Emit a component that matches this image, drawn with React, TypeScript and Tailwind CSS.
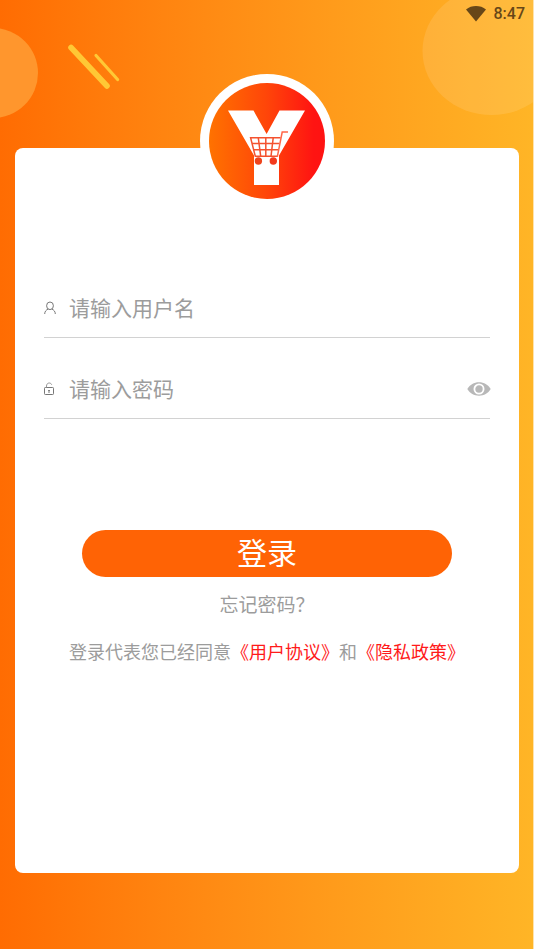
import { useState } from 'react';

function WifiIcon() {
  return (
    <svg width="20" height="16" viewBox="0 0 20 16" fill="#674718" aria-hidden="true">
      <path d="M0 3.4C2.9 1.2 6.3 0 10 0s7.1 1.2 10 3.4L10 15.6z" />
    </svg>
  );
}

function Decoration() {
  return (
    <>
      <svg
        className="absolute left-0 top-0 pointer-events-none"
        width="140"
        height="130"
        viewBox="0 0 140 130"
        aria-hidden="true"
      >
        <circle cx="-7" cy="73" r="45" fill="#ff962d" />
        <g stroke="#ffc835" strokeLinecap="round">
          <path d="M71 47.5L107 86" strokeWidth="5.6" />
          <path d="M96 55.5L117.6 79.5" strokeWidth="3.2" />
        </g>
      </svg>
      <svg
        className="absolute right-0 top-0 pointer-events-none"
        width="112"
        height="120"
        viewBox="0 0 112 120"
        aria-hidden="true"
      >
        <ellipse cx="70.5" cy="51" rx="69" ry="64" fill="#fff" fillOpacity="0.11" />
      </svg>
    </>
  );
}

function Logo() {
  return (
    <svg width="116" height="116" viewBox="0 0 116 116" role="img" aria-label="Logo">
      <defs>
        <linearGradient id="logo-fill" x1="0" y1="0" x2="1" y2="0">
          <stop offset="0" stopColor="#ff7200" />
          <stop offset="0.5" stopColor="#ff4509" />
          <stop offset="0.9" stopColor="#ff1412" />
          <stop offset="1" stopColor="#ff1212" />
        </linearGradient>
      </defs>
      <circle cx="58" cy="58" r="58" fill="url(#logo-fill)" />
      <path d="M19 27.5h25.5L57.6 51 70.5 27.5H96L70 72.5V102H45V72.5z" fill="#fff" />
      <g fill="none" stroke="#f4522f" strokeWidth="1.5">
        <path d="M68.3 73.3H46.3L41.6 54.8H71.6" />
        <path d="M43 60.6h27.5M44.6 66.8h25M49.3 54.8l2.4 18.5M56.8 54.8v18.5M64.2 54.8l-2.2 18.5" />
        <path d="M68.3 73.8L73.2 49H79" stroke="#ff6547" />
      </g>
      <circle cx="49.4" cy="78" r="3.7" fill="#ee441d" />
      <circle cx="64.3" cy="78" r="3.7" fill="#f33a1e" />
    </svg>
  );
}

function UserIcon() {
  return (
    <svg width="12" height="14" viewBox="0 0 12 14" fill="none" stroke="#777" strokeWidth="1" aria-hidden="true">
      <ellipse cx="6" cy="4.8" rx="3.4" ry="3.8" />
      <path d="M0.7 13c0-2.4 1.4-4.2 3.6-5M11.3 13c0-2.4-1.4-4.2-3.6-5" />
    </svg>
  );
}

function LockIcon() {
  return (
    <svg width="11" height="14" viewBox="0 0 11 14" fill="none" stroke="#777" strokeWidth="1" aria-hidden="true">
      <rect x="0.5" y="5.5" width="9" height="7" rx="0.8" />
      <path d="M2.5 5.5V4c0-1.8 1.2-3 2.7-3 1.3 0 2.2.7 2.5 1.8" stroke="#999" />
      <path d="M5 8v3M4.2 8.5h1.7" />
    </svg>
  );
}

function EyeIcon() {
  return (
    <svg width="24" height="14" viewBox="0 0 24 14" aria-hidden="true">
      <path d="M0.3 7C3 2.6 7 0.3 12 0.3S21 2.6 23.7 7C21 11.4 17 13.7 12 13.7S3 11.4 0.3 7z" fill="#b8b8b8" />
      <circle cx="12" cy="7" r="4.6" fill="#b8b8b8" stroke="#fff" strokeWidth="1.8" />
    </svg>
  );
}

export default function App() {
  const [username, setUsername] = useState('');
  const [password, setPassword] = useState('');
  const [showPassword, setShowPassword] = useState(false);

  const handleSubmit = (e: React.FormEvent) => {
    e.preventDefault();
  };

  return (
    <div className="relative flex min-h-screen flex-col border-r border-[#ffe3ac] bg-linear-to-r from-[#ff6c02] to-[#ffb526] pb-[76px] font-['Noto_Sans_CJK_SC',sans-serif]">
      <Decoration />

      <header className="relative flex h-7 items-center justify-end gap-2 pr-2 font-['Roboto',sans-serif] text-base font-medium text-[#674718]">
        <WifiIcon />
        <span>8:47</span>
      </header>

      <main className="relative ml-[15px] mr-3.5 mt-[120px] flex flex-1 flex-col rounded-lg bg-white px-[29px] pb-8">
        <div className="-mt-[74px] flex size-[134px] items-center justify-center self-center rounded-full bg-white">
          <Logo />
        </div>

        <form onSubmit={handleSubmit} className="mt-[70px] flex flex-col">
          <div className="flex h-[60px] items-center gap-[13px] border-b border-[#d2d2d2]">
            <label htmlFor="username" aria-label="请输入用户名" className="w-3">
              <UserIcon />
            </label>
            <input
              id="username"
              type="text"
              value={username}
              onChange={(e) => setUsername(e.target.value)}
              placeholder="请输入用户名"
              className="min-w-0 flex-1 text-[21px] text-gray-700 outline-none placeholder:text-[#9c9c9c]"
            />
          </div>

          <div className="mt-[21px] flex h-[60px] items-center gap-[13px] border-b border-[#d2d2d2]">
            <label htmlFor="password" aria-label="请输入密码" className="w-3">
              <LockIcon />
            </label>
            <input
              id="password"
              type={showPassword ? 'text' : 'password'}
              value={password}
              onChange={(e) => setPassword(e.target.value)}
              placeholder="请输入密码"
              className="min-w-0 flex-1 text-[21px] text-gray-700 outline-none placeholder:text-[#9c9c9c]"
            />
            <button type="button" aria-label="显示密码" className="-mr-px" onClick={() => setShowPassword(!showPassword)}>
              <EyeIcon />
            </button>
          </div>

          <button
            type="submit"
            className="mx-[38px] mt-[111px] flex h-[47px] items-center justify-center rounded-3xl bg-[#ff6305] pb-1 text-[30px] text-white"
          >
            登录
          </button>
        </form>

        <a href="#forgot" className="mt-[11px] self-center text-[19px] leading-8 text-[#9c9c9c]">
          忘记密码？
        </a>

        <p className="-mx-4 mt-[15px] text-center text-lg leading-8 text-[#9c9c9c]">
          登录代表您已经同意
          <a href="#agreement" className="text-[#ff1a1a]">《用户协议》</a>
          和
          <a href="#privacy" className="text-[#ff1a1a]">《隐私政策》</a>
        </p>
      </main>
    </div>
  );
}
